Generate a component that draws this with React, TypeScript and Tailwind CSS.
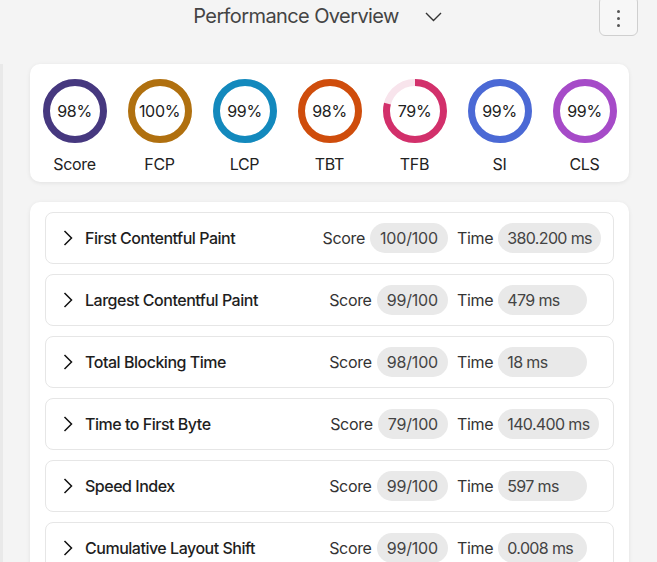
type Ring = { label: string; value: number; color: string; track: string };

const RINGS: Ring[] = [
  { label: 'Score', value: 98, color: '#46387f', track: '#e4e0f0' },
  { label: 'FCP', value: 100, color: '#b0700f', track: '#f3e6cf' },
  { label: 'LCP', value: 99, color: '#1389bd', track: '#d3e9f3' },
  { label: 'TBT', value: 98, color: '#cf4d0c', track: '#f6ddd0' },
  { label: 'TFB', value: 79, color: '#d2306b', track: '#f8e4ec' },
  { label: 'SI', value: 99, color: '#4b69d5', track: '#dde4f7' },
  { label: 'CLS', value: 99, color: '#a64bc8', track: '#eddff3' },
];

type Metric = { name: string; score: string; time: string };

const METRICS: Metric[] = [
  { name: 'First Contentful Paint', score: '100/100', time: '380.200 ms' },
  { name: 'Largest Contentful Paint', score: '99/100', time: '479 ms' },
  { name: 'Total Blocking Time', score: '98/100', time: '18 ms' },
  { name: 'Time to First Byte', score: '79/100', time: '140.400 ms' },
  { name: 'Speed Index', score: '99/100', time: '597 ms' },
  { name: 'Cumulative Layout Shift', score: '99/100', time: '0.008 ms' },
];

function ProgressRing({ value, color, track }: Ring) {
  const r = 28.5;
  const c = 2 * Math.PI * r;
  // near-full scores read as a closed ring
  const shown = value >= 98 ? 100 : value;
  return (
    <div className="relative h-16 w-16">
      <svg width="64" height="64" viewBox="0 0 64 64" className="-rotate-90">
        <circle cx="32" cy="32" r={r} fill="none" stroke={track} strokeWidth="7" />
        <circle
          cx="32"
          cy="32"
          r={r}
          fill="none"
          stroke={color}
          strokeWidth="7"
          strokeDasharray={`${(c * shown) / 100} ${c}`}
        />
      </svg>
      <span className="absolute inset-0 flex items-center justify-center text-[16px] tracking-[-0.02em] text-[#222]">
        {value}%
      </span>
    </div>
  );
}

export default function App() {
  return (
    <div className="min-h-[562px] bg-[#f4f4f4] font-['Inter',sans-serif] text-[#222]">
      {/* Header */}
      <div className="flex h-[44px] items-start">
        <div className="flex flex-1 items-center justify-center gap-[26px] pl-9 pt-[4px]">
          <h1 className="text-[20px] leading-6 tracking-[-0.03em] text-[#444]">Performance Overview</h1>
          <svg width="17" height="10" viewBox="0 0 17 10" fill="none" className="mt-[2px]">
            <polyline points="1,1 8.5,8.5 16,1" stroke="#333" strokeWidth="1.4" />
          </svg>
        </div>
        <button className="mr-[19px] -mt-1 flex h-[40px] w-[39px] flex-col items-center justify-center gap-[4px] rounded-md border border-[#cfcfcf] bg-[#f7f7f7] pt-1">
          <span className="h-[3px] w-[3px] rounded-full bg-[#555]" />
          <span className="h-[3px] w-[3px] rounded-full bg-[#555]" />
          <span className="h-[3px] w-[3px] rounded-full bg-[#555]" />
        </button>
      </div>

      <div className="mt-[20px] border-l-[3px] border-[#e9e9e9] pl-[27px] pr-[28px]">
        {/* Rings */}
        <div className="grid grid-cols-7 rounded-[10px] bg-white px-0.5 pb-[8px] pt-[15px] shadow-[0_1px_4px_rgba(0,0,0,0.08)]">
          {RINGS.map((ring) => (
            <div key={ring.label} className="flex flex-col items-center">
              <ProgressRing {...ring} />
              <span className="mt-[11px] text-[16px] leading-5 tracking-[-0.02em] text-[#222]">{ring.label}</span>
            </div>
          ))}
        </div>

        {/* Metrics */}
        <div className="mt-[20px] flex flex-col gap-[10px] rounded-[10px] bg-white px-[15px] pb-4 pt-[10px] shadow-[0_1px_4px_rgba(0,0,0,0.08)]">
          {METRICS.map((m) => (
            <div
              key={m.name}
              className="flex h-[52px] items-center rounded-lg border border-[#e6e6e6] pl-[17px]"
            >
              <svg width="10" height="16" viewBox="0 0 10 16" fill="none">
                <polyline points="1.5,1 8.5,8 1.5,15" stroke="#111" strokeWidth="1.5" />
              </svg>
              <span className="ml-[12px] flex-1 text-[16px] font-medium tracking-[-0.03em] text-[#1e1e1e]">
                {m.name}
              </span>
              <div className="flex items-center whitespace-nowrap text-[16px]">
                <span className="tracking-[-0.02em] text-[#333]">Score</span>
                <span className="ml-[5px] flex h-[30px] items-center rounded-full bg-[#e9e9e9] px-[10px] tracking-[-0.01em] text-[#444]">
                  {m.score}
                </span>
              </div>
              <div className="flex w-[165px] items-center whitespace-nowrap pl-[9px] text-[16px]">
                <span className="tracking-[-0.02em] text-[#333]">Time</span>
                <span className="ml-[5px] flex h-[30px] min-w-[89px] items-center rounded-full bg-[#e9e9e9] px-[9px] tracking-[-0.04em] text-[#444]">
                  {m.time}
                </span>
              </div>
            </div>
          ))}
        </div>
      </div>
    </div>
  );
}
